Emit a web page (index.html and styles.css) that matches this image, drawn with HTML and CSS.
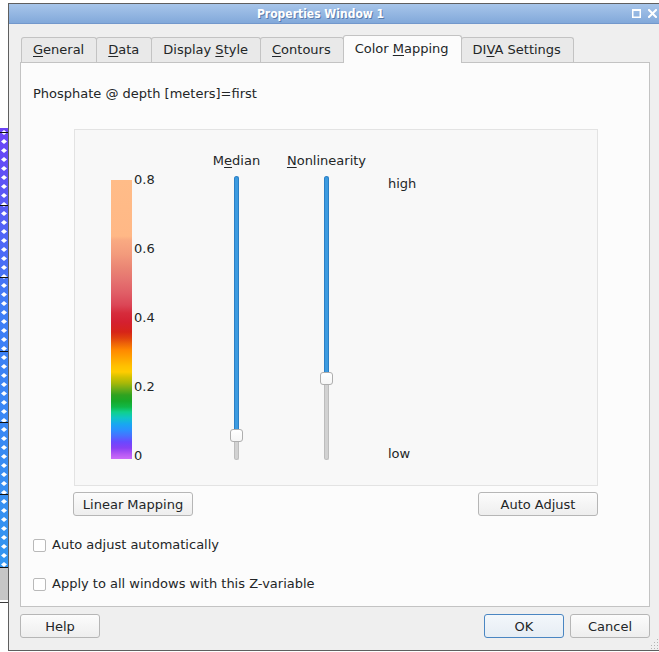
FILE: index.html
```html
<!DOCTYPE html>
<html>
<head>
<meta charset="utf-8">
<link rel="stylesheet" href="styles.css">
</head>
<body>
<div class="screen">
  <div class="bgwin">
    <div class="bg-top"></div>
    <svg class="bg-strip" width="8" height="440" viewBox="0 0 8 440">
      <defs>
        <linearGradient id="sg" x1="0" y1="0" x2="0" y2="1">
          <stop offset="0" stop-color="#6b42f6"/>
          <stop offset="0.4" stop-color="#3f7cf6"/>
          <stop offset="1" stop-color="#3496f0"/>
        </linearGradient>
        <pattern id="dm" width="8" height="9" patternUnits="userSpaceOnUse">
          <polygon points="1,4.5 4,2 7,4.5 4,7" fill="#fff"/>
        </pattern>
      </defs>
      <rect width="8" height="440" fill="url(#sg)"/>
      <rect width="8" height="440" fill="url(#dm)"/>
      <g fill="#111">
        <rect y="4" width="8" height="1"/>
        <rect y="77" width="8" height="1"/>
        <rect y="149" width="8" height="1"/>
        <rect y="223" width="8" height="1"/>
        <rect y="294" width="8" height="1"/>
        <rect y="366" width="8" height="1"/>
        <rect y="439" width="8" height="1"/>
      </g>
    </svg>
    <div class="bg-gray"></div>
    <div class="bg-line"></div>
  </div>

  <div class="dialog">
    <div class="titlebar">
      <span class="title">Properties Window 1</span>
      <div class="wbtns">
        <svg width="9" height="9" viewBox="0 0 9 9"><rect x="0.75" y="1" width="7.5" height="7.25" fill="none" stroke="#fff" stroke-width="1.5"/><rect x="0" y="0" width="9" height="2" fill="#fff"/></svg>
        <svg width="9" height="9" viewBox="0 0 9 9"><path d="M1 1 L8 8 M8 1 L1 8" stroke="#fff" stroke-width="2" stroke-linecap="square"/></svg>
      </div>
    </div>

    <div class="dbody">
      <div class="tabbar">
        <div class="tab"><u>G</u>eneral</div>
        <div class="tab"><u>D</u>ata</div>
        <div class="tab">Display <u>S</u>tyle</div>
        <div class="tab"><u>C</u>ontours</div>
        <div class="tab active">Color <u>M</u>apping</div>
        <div class="tab">DI<u>V</u>A Settings</div>
      </div>

      <div class="pane">
        <div class="varname">Phosphate @ depth [meters]=first</div>

        <div class="frame">
          <div class="cbar-group">
            <div class="cbar"></div>
            <div class="cbar-labels">
              <span>0.8</span>
              <span>0.6</span>
              <span>0.4</span>
              <span>0.2</span>
              <span>0</span>
            </div>
          </div>

          <div class="slider-col median">
            <div class="slabel">M<u>e</u>dian</div>
            <div class="slider">
              <div class="fill"></div>
              <div class="rest"></div>
              <div class="handle"></div>
            </div>
          </div>

          <div class="slider-col nonlin">
            <div class="slabel"><u>N</u>onlinearity</div>
            <div class="slider">
              <div class="fill"></div>
              <div class="rest"></div>
              <div class="handle"></div>
            </div>
          </div>

          <div class="hilo">
            <span>high</span>
            <span>low</span>
          </div>
        </div>

        <div class="btnrow">
          <button class="btn wide">Linear Mapping</button>
          <button class="btn wide">Auto Adjust</button>
        </div>

        <label class="check first"><span class="box"></span>Auto adjust automatically</label>
        <label class="check second"><span class="box"></span>Apply to all windows with this Z-variable</label>
      </div>

      <div class="dlgbtns">
        <button class="btn">Help</button>
        <div class="spacer"></div>
        <button class="btn default">OK</button>
        <button class="btn">Cancel</button>
      </div>
    </div>

    <svg class="grip" width="10" height="12" viewBox="0 0 10 12">
      <g fill="#b4b4b4">
        <rect x="8" y="1" width="1" height="1"/>
        <rect x="8" y="4" width="1" height="1"/>
        <rect x="5" y="4" width="1" height="1"/>
        <rect x="8" y="7" width="1" height="1"/>
        <rect x="5" y="7" width="1" height="1"/>
        <rect x="2" y="7" width="1" height="1"/>
        <rect x="8" y="10" width="1" height="1"/>
        <rect x="5" y="10" width="1" height="1"/>
        <rect x="2" y="10" width="1" height="1"/>
      </g>
    </svg>
  </div>
</div>
</body>
</html>
```

FILE: styles.css
```css
html, body {
  margin: 0;
  padding: 0;
}

body {
  width: 659px;
  height: 652px;
  overflow: hidden;
  background: #ffffff;
  font-family: "DejaVu Sans", "Liberation Sans", sans-serif;
  font-size: 13px;
  color: #232627;
}

u {
  text-decoration: underline;
  text-underline-offset: 2px;
}

.screen {
  display: flex;
  width: 662px;
  height: 652px;
}

/* window behind the dialog */
.bgwin {
  width: 8px;
  flex: none;
  display: flex;
  flex-direction: column;
}

.bg-top {
  height: 128px;
  background: #ffffff;
}

.bg-strip {
  display: block;
}

.bg-gray {
  height: 32px;
  background: #c6c6c6;
}

.bg-line {
  height: 1px;
  margin-top: 2px;
  background: #3a3a3a;
}

/* dialog */
.dialog {
  position: relative;
  width: 653px;
  height: 648px;
  flex: none;
  margin-top: 3px;
  box-sizing: border-box;
  border: 1px solid #5f5f5f;
  border-right: none;
  background: #efefef;
  display: flex;
  flex-direction: column;
}

.titlebar {
  height: 20px;
  flex: none;
  box-sizing: border-box;
  display: flex;
  align-items: center;
  background: linear-gradient(#a7c5ea, #82a9da);
  border-bottom: 1px solid #7398cc;
}

.title {
  flex: 1;
  text-align: center;
  color: #ffffff;
  font-weight: bold;
  font-size: 12px;
  font-stretch: condensed;
  text-shadow: 1px 1px 0 rgba(45, 75, 125, 0.55);
}

.wbtns {
  display: flex;
  align-items: center;
  gap: 7px;
  padding-right: 4px;
}

.wbtns svg {
  display: block;
}

.dbody {
  flex: 1;
  display: flex;
  flex-direction: column;
  padding: 11px 11px 0 11px;
}

/* tabs */
.tabbar {
  display: flex;
  align-items: flex-end;
  height: 27px;
  padding-left: 1px;
}

.tab {
  height: 25px;
  box-sizing: border-box;
  line-height: 24px;
  padding: 0 12px 0 11px;
  margin-right: -1px;
  border: 1px solid #c3c3c3;
  border-bottom: none;
  border-radius: 3px 3px 0 0;
  background: #e9e9e9;
  white-space: nowrap;
}

.tab.active {
  position: relative;
  z-index: 1;
  height: 28px;
  margin-bottom: -1px;
  line-height: 26px;
  background: #fcfcfc;
}

/* pane */
.pane {
  width: 630px;
  height: 545px;
  box-sizing: border-box;
  border: 1px solid #c3c3c3;
  background: #fcfcfc;
  padding: 23px 0 0 12px;
  display: flex;
  flex-direction: column;
  align-items: flex-start;
}

.varname {
  line-height: 16px;
}

.frame {
  margin: 27px 0 0 41px;
  width: 524px;
  height: 357px;
  box-sizing: border-box;
  border: 1px solid #e3e3e3;
  background: #f8f8f8;
  display: flex;
  align-items: flex-start;
  padding-left: 36px;
}

.cbar-group {
  width: 91px;
  flex: none;
  display: flex;
  align-items: flex-start;
  padding-top: 42px;
}

.cbar {
  width: 21px;
  height: 279px;
  margin-top: 8px;
  background: linear-gradient(to bottom,
    #ffbc88 0px,
    #ffb886 56px,
    #f9aa82 60px,
    #f39b7c 74px,
    #ea8574 88px,
    #e57370 100px,
    #e05e66 113px,
    #db4656 125px,
    #d62c3c 133px,
    #d42030 142px,
    #d62418 152px,
    #e0400e 158px,
    #ee6608 164px,
    #ff8800 170px,
    #ffa400 178px,
    #ffc000 186px,
    #ffcc00 192px,
    #d4c200 197px,
    #a8b808 203px,
    #6cac18 209px,
    #30a220 215px,
    #18a828 221px,
    #10b848 227px,
    #10d08c 232px,
    #10c4c8 238px,
    #18a8f0 244px,
    #2a90ff 250px,
    #4870ff 256px,
    #6a48ff 262px,
    #8840f4 268px,
    #b458f4 274px,
    #cc6cf8 279px);
}

.cbar-labels {
  margin-left: 2px;
  height: 292px;
  display: flex;
  flex-direction: column;
  justify-content: space-between;
  line-height: 16px;
}

.slider-col {
  flex: none;
  display: flex;
  flex-direction: column;
  align-items: center;
  padding-top: 23px;
}

.slider-col.median {
  width: 69px;
}

.slider-col.nonlin {
  width: 111px;
}

.slabel {
  line-height: 16px;
  white-space: nowrap;
}

.slider {
  position: relative;
  width: 5px;
  height: 284px;
  margin-top: 7px;
  display: flex;
  flex-direction: column;
}

.slider .fill {
  box-sizing: border-box;
  background: #3d9be0;
  border: 1px solid #2c80c6;
  border-bottom: none;
  border-radius: 3px 3px 0 0;
}

.slider .rest {
  flex: 1;
  box-sizing: border-box;
  background: #d2d2d2;
  border: 1px solid #bdbdbd;
  border-top: none;
  border-radius: 0 0 3px 3px;
}

.median .fill {
  height: 259px;
}

.nonlin .fill {
  height: 202px;
}

.handle {
  position: absolute;
  left: -4px;
  width: 13px;
  height: 13px;
  box-sizing: border-box;
  background: linear-gradient(#ffffff, #f6f6f6);
  border: 1px solid #aeaeae;
  border-radius: 3px;
}

.median .handle {
  top: 253px;
}

.nonlin .handle {
  top: 196px;
}

.hilo {
  margin-left: 6px;
  padding-top: 46px;
  height: 286px;
  display: flex;
  flex-direction: column;
  justify-content: space-between;
  line-height: 16px;
}

/* buttons */
.btn {
  height: 24px;
  width: 80px;
  box-sizing: border-box;
  padding: 1px 0 0 0;
  border: 1px solid #b6b6b6;
  border-radius: 3px;
  background: linear-gradient(#fcfcfc, #eeeeee);
  font-family: "DejaVu Sans", "Liberation Sans", sans-serif;
  font-size: 13px;
  color: #232627;
  line-height: 21px;
}

.btn.wide {
  width: 120px;
}

.btn.default {
  border-color: #4a86c2;
  background: linear-gradient(#f3f7fb, #e6edf4);
}

.btnrow {
  margin: 6px 0 0 40px;
  width: 525px;
  display: flex;
  justify-content: space-between;
}

.check {
  display: flex;
  align-items: center;
  line-height: 16px;
  white-space: nowrap;
}

.check.first {
  margin-top: 21px;
}

.check.second {
  margin-top: 23px;
}

.box {
  width: 13px;
  height: 13px;
  box-sizing: border-box;
  border: 1px solid #b9b9b9;
  border-radius: 2px;
  background: #ffffff;
  margin-right: 6px;
}

.dlgbtns {
  width: 630px;
  margin-top: 7px;
  display: flex;
  gap: 6px;
}

.spacer {
  flex: 1;
}

.grip {
  position: absolute;
  right: 2px;
  bottom: 0;
}
```
